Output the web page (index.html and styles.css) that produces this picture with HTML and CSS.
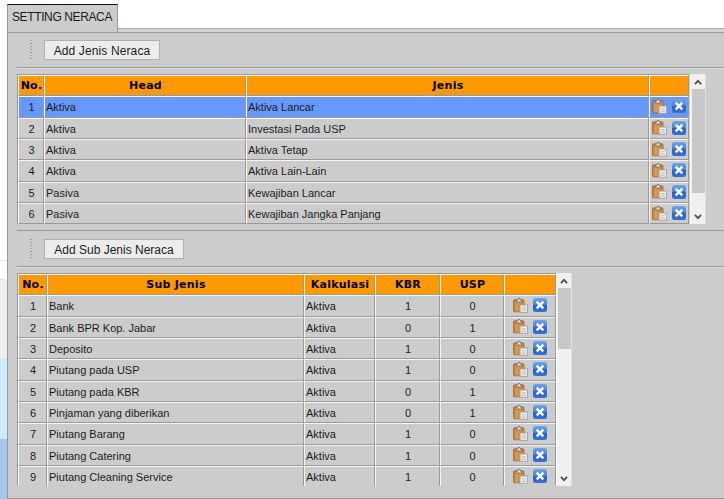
FILE: index.html
```
<!DOCTYPE html>
<html lang="id">
<head>
<meta charset="utf-8">
<title>Setting Neraca</title>
<link rel="stylesheet" href="styles.css">
</head>
<body>
<svg class="defs" aria-hidden="true">
  <defs>
    <linearGradient id="blue" x1="0" y1="0" x2="0" y2="1"><stop offset="0" stop-color="#6aa5ee"/><stop offset=".48" stop-color="#4784de"/><stop offset=".52" stop-color="#2a62cc"/><stop offset="1" stop-color="#356fdb"/></linearGradient>
    <linearGradient id="board" x1="0" y1="0" x2="1" y2="0"><stop offset="0" stop-color="#b87333"/><stop offset=".25" stop-color="#dc9c50"/><stop offset="1" stop-color="#c88443"/></linearGradient>
    <symbol id="paste" viewBox="0 0 15 15">
      <rect x=".5" y="1.8" width="10.5" height="12" rx="1" fill="url(#board)" stroke="#a9672f" stroke-width=".8"/>
      <path d="M3 4V2.2h1.5L5 .6h2l.6 1.6H9V4z" fill="#e4e1d4" stroke="#696653" stroke-width=".8"/>
      <rect x="7" y="7" width="7.5" height="7.3" fill="#ececea" stroke="#a3a39e" stroke-width=".9"/>
      <path d="M8.5 9.5h4.5M8.5 11h4.5M8.5 12.5h4.5" stroke="#bdbdba" stroke-width=".7"/>
    </symbol>
    <symbol id="delete" viewBox="0 0 14 14">
      <rect width="14" height="14" rx="2.5" fill="url(#blue)"/>
      <path d="M3.7 3.7l6.6 6.6M10.3 3.7l-6.6 6.6" stroke="#fff" stroke-width="2.4"/>
    </symbol>
    <symbol id="up" viewBox="0 0 8 6"><path d="M.9 5.1L4 1.8l3.1 3.3" fill="none" stroke="#505050" stroke-width="1.8"/></symbol>
  </defs>
</svg>
<div class="page">
  <div class="gutter"><i class="g-white"></i><i class="g-box"></i><i class="g-gray"></i><i class="g-sky"></i><i class="g-blue"></i></div>
  <main class="window">
    <div class="tabs"><div class="tab">SETTING NERACA</div><div class="tab-rest"></div></div>
    <section class="panel">
      <div class="toolbar first"><span class="grip"></span><button class="btn jenis">Add Jenis Neraca</button></div>
      <div class="listing heads">
        <div class="grid" id="heads"></div>
        <div class="scroll"><svg class="arrow"><use href="#up"/></svg><span class="thumb"></span><svg class="arrow down"><use href="#up"/></svg></div>
      </div>
      <div class="toolbar second"><span class="grip"></span><button class="btn sub">Add Sub Jenis Neraca</button></div>
      <div class="listing subs">
        <div class="grid" id="subs"></div>
        <div class="scroll"><svg class="arrow"><use href="#up"/></svg><span class="thumb"></span><svg class="arrow down"><use href="#up"/></svg></div>
      </div>
    </section>
  </main>
</div>
<script src="script.js"></script>
</body>
</html>
```
FILE: styles.css
```
* { box-sizing: border-box; }
body { margin: 0; background: #fff; font: 11px "Liberation Sans", Arial, sans-serif; color: #1c1c1c; overflow: hidden; }
.defs { position: absolute; width: 0; height: 0; }
.page { display: flex; width: 724px; height: 499px; }
.gutter { width: 7px; display: flex; flex-direction: column; }
.g-white { height: 260px; }
.g-box { height: 20px; border-top: 1px solid #e2e2e2; border-bottom: 1px solid #e2e2e2; width: 6px; }
.g-gray { height: 79px; background: #f0f0f0; border-bottom: 1px solid #e4e4e4; }
.g-sky { height: 80px; background: #cbecff; }
.g-blue { flex: 1; background: #a5c7ef; }
.window { flex: 1; min-width: 0; display: flex; flex-direction: column; padding-top: 4px; }
.tabs { display: flex; height: 28px; }
.tab { width: 111px; background: #ccc; border-top: 1px solid #111; border-left: 1px solid #999; border-right: 1px solid #999; font-size: 12px; line-height: 25px; padding-left: 4px; white-space: nowrap; letter-spacing: -.38px; }
.tab-rest { flex: 1; align-self: flex-end; height: 4px; background: #d4d4d4; border-top: 1px solid #aaa; }
.panel { flex: 1; background: #ccc; border: solid #999; border-width: 1px 0 1px 1px; padding-left: 9px; display: flex; flex-direction: column; }
.toolbar { display: flex; align-items: flex-start; padding-left: 13px; border-bottom: 1px solid #999; box-shadow: 0 1px #ddd; }
.first { height: 35px; padding-top: 7px; }
.second { height: 37px; border-top: 1px solid #999; padding-top: 8px; margin-top: 6px; }
.grip { width: 2px; height: 20px; background: repeating-linear-gradient(#a0a0a0 0 1px, transparent 1px 3px); margin-right: 12px; }
.btn { height: 20px; padding: 0; border: 1px solid #b0b0b0; background: #ececec; font: 12px "Liberation Sans", Arial, sans-serif; color: #1c1c1c; line-height: 20px; white-space: nowrap; }
.jenis { width: 116px; letter-spacing: .12px; }
.sub { width: 140px; }
.listing { display: flex; }
.heads { margin-top: 6px; height: 150px; }
.subs { margin-top: 6px; height: 213px; overflow: hidden; }
.grid { display: grid; grid-auto-rows: 21.333px; border-left: 1px solid #999; border-top: 1px solid #999; }
.heads .grid { grid-template-columns: 26px 202px 403px 40px; }
.subs .grid { grid-template-columns: 29px 257px 71px 65px 64px 52px; }
.cell { border: solid; border-width: 1px; border-color: #f6f6f6 #999 #999 #f6f6f6; padding-left: 1px; line-height: 20px; white-space: nowrap; overflow: hidden; }
.head { background: #f90; color: #000; font: bold 11px/20px "DejaVu Sans", Verdana, sans-serif; letter-spacing: .25px; text-align: center; }
.mid { text-align: center; }
.selected { background: #69f; }
.actions { display: flex; align-items: center; justify-content: center; gap: 5px; padding: 0 1px 1px 0; }
.icon-paste { width: 15px; height: 15px; }
.icon-delete { width: 14px; height: 14px; }
.scroll { width: 16px; background: #f0f0f0; border-left: 1px solid #fff; border-right: 1px solid #e0e0e0; display: flex; flex-direction: column; align-items: center; }
.arrow { width: 8px; height: 6px; margin: 5px 0 4px; }
.down { transform: rotate(180deg); margin: auto 0 4px; }
.thumb { width: 13px; background: #c8c8c8; }
.heads .scroll { margin-left: 1px; }
.heads .thumb { height: 104px; }
.subs .thumb { height: 61px; }
```
FILE: script.js
```
const actions = '<svg class="icon-paste"><use href="#paste"/></svg><svg class="icon-delete"><use href="#delete"/></svg>';

function fill(id, titles, rows, selected) {
  const head = titles.map(t => `<div class="cell head">${t}</div>`).join('');
  const body = rows.map((row, i) => {
    const state = i === selected ? ' selected' : '';
    const values = [i + 1, ...row].map(v =>
      `<div class="cell${typeof v === 'number' ? ' mid' : ''}${state}">${v}</div>`).join('');
    return values + `<div class="cell actions${state}">${actions}</div>`;
  }).join('');
  document.getElementById(id).innerHTML = head + body;
}

fill('heads', ['No.', 'Head', 'Jenis', ''], [
  ['Aktiva', 'Aktiva Lancar'],
  ['Aktiva', 'Investasi Pada USP'],
  ['Aktiva', 'Aktiva Tetap'],
  ['Aktiva', 'Aktiva Lain-Lain'],
  ['Pasiva', 'Kewajiban Lancar'],
  ['Pasiva', 'Kewajiban Jangka Panjang']
], 0);

fill('subs', ['No.', 'Sub Jenis', 'Kalkulasi', 'KBR', 'USP', ''], [
  ['Bank', 'Aktiva', 1, 0],
  ['Bank BPR Kop. Jabar', 'Aktiva', 0, 1],
  ['Deposito', 'Aktiva', 1, 0],
  ['Piutang pada USP', 'Aktiva', 1, 0],
  ['Piutang pada KBR', 'Aktiva', 0, 1],
  ['Pinjaman yang diberikan', 'Aktiva', 0, 1],
  ['Piutang Barang', 'Aktiva', 1, 0],
  ['Piutang Catering', 'Aktiva', 1, 0],
  ['Piutang Cleaning Service', 'Aktiva', 1, 0]
], -1);
```
